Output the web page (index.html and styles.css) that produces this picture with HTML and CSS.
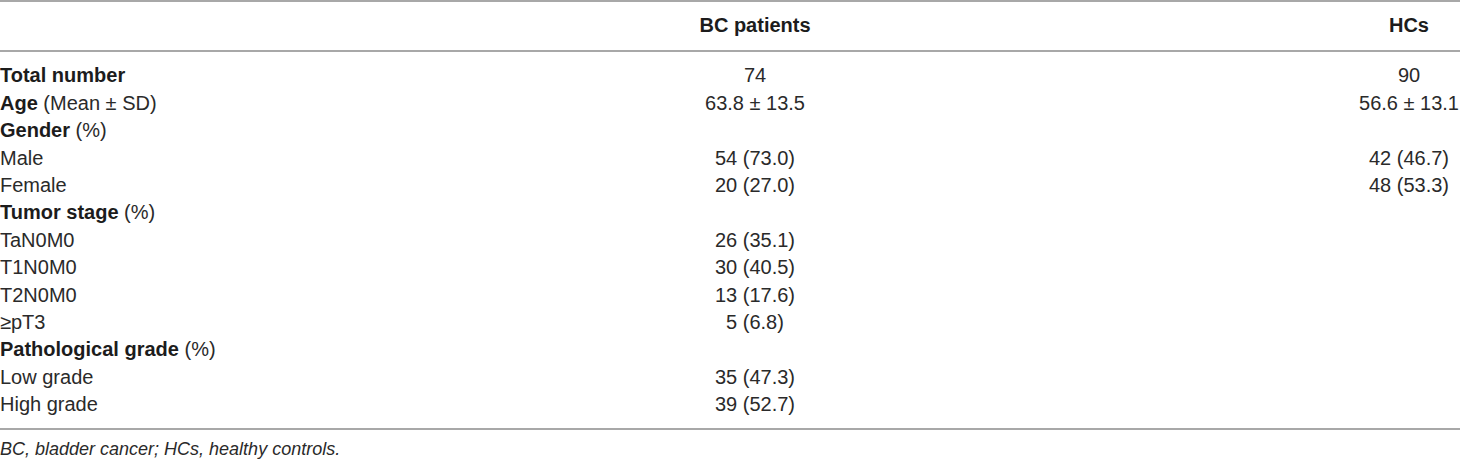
FILE: index.html
```html
<!DOCTYPE html>
<html lang="en">
<head>
<meta charset="utf-8">
<title>Table</title>
<link rel="stylesheet" href="styles.css">
</head>
<body>
<div class="table">
  <div class="row head">
    <div class="c1"></div>
    <div class="c2"><b>BC patients</b></div>
    <div class="c3"><b>HCs</b></div>
  </div>
  <div class="body">
    <div class="row"><div class="c1"><b>Total number</b></div><div class="c2">74</div><div class="c3">90</div></div>
    <div class="row"><div class="c1"><b>Age</b> (Mean ± SD)</div><div class="c2">63.8 ± 13.5</div><div class="c3">56.6 ± 13.1</div></div>
    <div class="row"><div class="c1"><b>Gender</b> (%)</div><div class="c2"></div><div class="c3"></div></div>
    <div class="row"><div class="c1">Male</div><div class="c2">54 (73.0)</div><div class="c3">42 (46.7)</div></div>
    <div class="row"><div class="c1">Female</div><div class="c2">20 (27.0)</div><div class="c3">48 (53.3)</div></div>
    <div class="row"><div class="c1"><b>Tumor stage</b> (%)</div><div class="c2"></div><div class="c3"></div></div>
    <div class="row"><div class="c1">TaN0M0</div><div class="c2">26 (35.1)</div><div class="c3"></div></div>
    <div class="row"><div class="c1">T1N0M0</div><div class="c2">30 (40.5)</div><div class="c3"></div></div>
    <div class="row"><div class="c1">T2N0M0</div><div class="c2">13 (17.6)</div><div class="c3"></div></div>
    <div class="row"><div class="c1">≥pT3</div><div class="c2">5 (6.8)</div><div class="c3"></div></div>
    <div class="row"><div class="c1"><b>Pathological grade</b> (%)</div><div class="c2"></div><div class="c3"></div></div>
    <div class="row"><div class="c1">Low grade</div><div class="c2">35 (47.3)</div><div class="c3"></div></div>
    <div class="row"><div class="c1">High grade</div><div class="c2">39 (52.7)</div><div class="c3"></div></div>
  </div>
  <p class="note">BC, bladder cancer; HCs, healthy controls.</p>
</div>
</body>
</html>
```

FILE: styles.css
```css
html, body {
  margin: 0;
  padding: 0;
  background: #ffffff;
}

body {
  font-family: "Liberation Sans", Arial, sans-serif;
  font-size: 20px;
  color: #2a2a2a;
  width: 1460px;
}

.table {
  display: flex;
  flex-direction: column;
}

b {
  font-weight: bold;
  color: #1c1c1c;
}

.row {
  display: grid;
  grid-template-columns: 555px 400px 1fr 102px;
  line-height: 27.4px;
  height: 27.4px;
  white-space: nowrap;
}

.row .c2 {
  text-align: center;
}

.row .c3 {
  grid-column: 4;
  text-align: center;
}

.head {
  height: auto;
  border-top: 2px solid #a8a8a8;
  border-bottom: 2px solid #a8a8a8;
  padding: 9.5px 0 11.1px;
}

.body {
  padding: 10.4px 0 9.4px;
  border-bottom: 2px solid #a8a8a8;
}

.note {
  margin: 8.7px 0 0;
  font-size: 18px;
  font-style: italic;
  color: #2a2a2a;
}
```
